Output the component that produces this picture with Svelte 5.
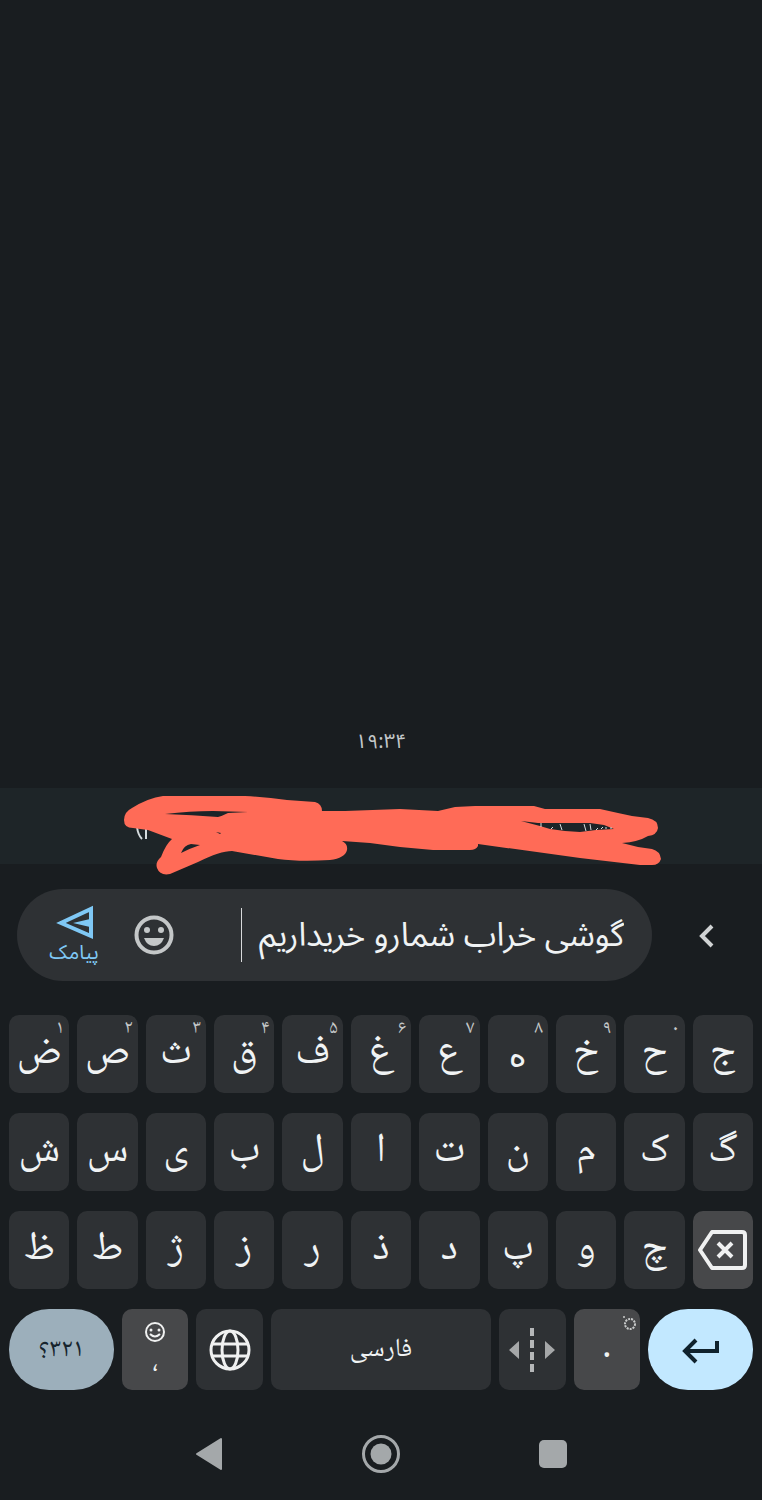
<script lang="ts">
	type Key = { label: string; hint?: string; plain?: boolean };

	const rows: Key[][] = [
		[
			{ label: 'ض', hint: '۱' },
			{ label: 'ص', hint: '۲' },
			{ label: 'ث', hint: '۳' },
			{ label: 'ق', hint: '۴' },
			{ label: 'ف', hint: '۵' },
			{ label: 'غ', hint: '۶' },
			{ label: 'ع', hint: '۷' },
			// the Noto faces draw a lone heh knotted
			{ label: 'ه', hint: '۸', plain: true },
			{ label: 'خ', hint: '۹' },
			{ label: 'ح', hint: '۰' },
			{ label: 'ج' }
		],
		[...'شسیبلاتنمکگ'].map((label) => ({ label })),
		[...'ظطژزرذدپوچ'].map((label) => ({ label }))
	];

	let draft = $state('گوشی خراب شمارو خریداریم');
</script>

<div class="phone">
	<main class="thread">
		<time class="stamp">۱۹:۳۴</time>
	</main>

	<div class="notice">
		<svg class="scribble" viewBox="0 788 762 92" aria-hidden="true">
			<g fill="none" stroke="#d5dcde" stroke-width="2">
				<path d="M137 827q1 8 5 12M146 829v10" />
			</g>
			<path
				fill="#ff6b57"
				d="M124 820Q124 812 132 808Q148 798 163 796H245Q267 797 287 800L315 802Q322 804 322 811L345 811L400 809L438 811L455 807L475 806H534L545 809H600L618 813L632 816L648 818Q658 820 658 828Q657 835 648 836Q638 842 622 843L638 847L652 849Q660 851 661 859Q659 865 652 865H640L580 858L478 844V846Q476 850 470 850H433L400 847L370 843L342 841Q348 844 347 850Q345 858 330 860Q300 862 278 859L232 851Q220 851 198 862L170 874Q160 876 157 868Q155 862 161 857Q166 844 172 839L148 830L133 828Q124 828 124 820Z"
			/>
			<g fill="#1c2428">
				<path d="M165 814Q190 811 213 811L248 812L228 813Q222 816 218 817Q192 815 165 814Z" />
				<path d="M181 853Q184 845 191 844L200 845Q191 848 181 853ZM216 832l5 1-1 1Z" />
				<path d="M521 821L538 823L590 823L604 825L614 829L596 830L580 832L565 831L550 829L540 826Z" />
			</g>
			<g fill="none" stroke="#d5dcde">
				<path
					d="M541 823v4M560 824l2 6M551 829l2-2M584 824l2 7M590 824l1 6M596 830l2-2M601 829l2-2M606 829v-2M611 829v-2"
				/>
			</g>
		</svg>
	</div>

	<form class="composer" onsubmit={(e) => e.preventDefault()}>
		<div class="field">
			<button class="send" type="submit">
				<svg width="40" height="36" viewBox="0 0 40 36" aria-hidden="true">
					<path d="M35 4V31L5 18Z" fill="none" stroke="#7fc8f5" stroke-width="4" />
					<path d="M34 14V22L17 18Z" fill="#7fc8f5" />
				</svg>
				<span>پیامک</span>
			</button>
			<button class="emoji" type="button" aria-label="شکلک">
				<svg width="40" height="40" viewBox="0 0 40 40" aria-hidden="true">
					<circle cx="20" cy="20" r="17.5" fill="none" stroke="#c4c7c8" stroke-width="4" />
					<circle cx="13" cy="15" r="3" fill="#c4c7c8" />
					<circle cx="27" cy="15" r="3" fill="#c4c7c8" />
					<path d="M10 23H30Q27 31 20 31T10 23Z" fill="#c4c7c8" />
				</svg>
			</button>
			<span class="caret"></span>
			<input class="draft" type="text" dir="rtl" aria-label="متن پیام" bind:value={draft} />
		</div>
		<button class="more" type="button" aria-label="بیشتر">
			<svg width="24" height="28" viewBox="0 0 24 28" aria-hidden="true">
				<path d="M17 5L7 15L17 25" fill="none" stroke="#d0d3d4" stroke-width="4" />
			</svg>
		</button>
	</form>

	<section class="keyboard">
		{#each rows as row, i}
			<div class="row">
				{#each row as key}
					<button class="key" class:plain={key.plain} type="button">
						<span>{key.label}</span>
						{#if key.hint}<span class="hint">{key.hint}</span>{/if}
					</button>
				{/each}
				{#if i === 2}
					<button class="key light" type="button" aria-label="پاک کردن">
						<svg width="50" height="40" viewBox="0 0 50 40" aria-hidden="true">
							<g fill="none" stroke="#f0f1f1" stroke-width="4" stroke-linejoin="round">
								<path d="M14 2H44Q47 2 47 5V35Q47 38 44 38H14L2 20Z" />
								<path d="M20 13L34 27M34 13L20 27" />
							</g>
						</svg>
					</button>
				{/if}
			</div>
		{/each}

		<div class="row bottom">
			<button class="key symbols" type="button" dir="rtl">۳۲۱؟</button>
			<button class="key light comma" type="button">
				<svg width="22" height="22" viewBox="0 0 22 22" aria-hidden="true">
					<circle cx="11" cy="11" r="9" fill="none" stroke="#f0f1f1" stroke-width="2" />
					<circle cx="7" cy="9" r="1.5" fill="#f0f1f1" />
					<circle cx="15" cy="9" r="1.5" fill="#f0f1f1" />
					<path d="M6 13Q11 18 16 13" fill="none" stroke="#f0f1f1" stroke-width="2" />
				</svg>
				<span>،</span>
			</button>
			<button class="key" type="button" aria-label="تغییر زبان">
				<svg width="42" height="42" viewBox="0 0 42 42" aria-hidden="true">
					<g fill="none" stroke="#f0f1f1" stroke-width="3">
						<circle cx="21" cy="21" r="19" />
						<ellipse cx="21" cy="21" rx="8" ry="19" />
						<path d="M3 15H39M3 27H39" />
					</g>
				</svg>
			</button>
			<button class="key space" type="button">فارسی</button>
			<button class="key" type="button" aria-label="جابه‌جایی مکان‌نما">
				<svg width="48" height="44" viewBox="0 0 48 44" aria-hidden="true">
					<path d="M11 13V31L1 22ZM37 13V31L47 22Z" fill="#a5a7a8" />
					<path d="M24 0V44" stroke="#b5b7b8" stroke-width="4" stroke-dasharray="8 4" />
				</svg>
			</button>
			<button class="key light period" type="button">
				<span>.</span>
				<svg class="mark" width="16" height="16" viewBox="0 0 16 16" aria-hidden="true">
					<circle cx="9" cy="9" r="5" fill="none" stroke="#c8caca" stroke-width="2" stroke-dasharray="2 1" />
					<circle cx="3" cy="2" r="1" fill="#c8caca" />
				</svg>
			</button>
			<button class="key enter" type="button" aria-label="خط بعد">
				<svg width="40" height="28" viewBox="0 0 40 28" aria-hidden="true">
					<path d="M36 5V15H5M15 4L4 15L15 26" fill="none" stroke="#10222d" stroke-width="4" />
				</svg>
			</button>
		</div>
	</section>

	<nav class="system">
		<button type="button" aria-label="بازگشت">
			<svg width="40" height="40" viewBox="0 0 40 40" aria-hidden="true">
				<path
					d="M32 5V35L8 20Z"
					fill="#a4a8aa"
					stroke="#a4a8aa"
					stroke-width="2"
					stroke-linejoin="round"
				/>
			</svg>
		</button>
		<button type="button" aria-label="خانه">
			<svg width="40" height="40" viewBox="0 0 40 40" aria-hidden="true">
				<circle cx="20" cy="20" r="17.5" fill="none" stroke="#a4a8aa" stroke-width="3" />
				<circle cx="20" cy="20" r="10.5" fill="#a4a8aa" />
			</svg>
		</button>
		<button type="button" aria-label="برنامه‌های اخیر">
			<svg width="40" height="40" viewBox="0 0 40 40" aria-hidden="true">
				<rect x="6" y="6" width="28" height="28" rx="5" fill="#a4a8aa" />
			</svg>
		</button>
	</nav>
</div>

<style>
	:global(body) {
		background: #191d20;
	}

	.phone {
		display: flex;
		flex-direction: column;
		min-height: 100vh;
		background: #191d20;
		color: #f0f3f4;
		font-family: 'Noto Sans Arabic', 'DejaVu Sans', sans-serif;
	}

	button {
		display: flex;
		align-items: center;
		justify-content: center;
		padding: 0;
		border: 0;
		background: none;
		color: inherit;
		font: inherit;
		cursor: pointer;
	}

	svg {
		display: block;
		flex: none;
	}

	.thread {
		flex: 1;
		display: flex;
		align-items: flex-end;
		justify-content: center;
		padding-bottom: 32px;
	}

	.stamp {
		color: #c4c8ca;
		font-size: 20px;
		line-height: 28px;
	}

	.notice {
		position: relative;
		height: 76px;
		background: #1e2528;
	}

	.scribble {
		position: absolute;
		top: 0;
		left: 0;
		width: 100%;
	}

	.composer {
		display: flex;
		align-items: center;
		gap: 43px;
		padding: 25px 43px 34px 17px;
	}

	.field {
		flex: 1;
		display: flex;
		align-items: center;
		min-width: 0;
		height: 92px;
		padding: 0 28px;
		box-sizing: border-box;
		border-radius: 46px;
		background: #2e3134;
	}

	.send {
		flex-direction: column;
		width: 58px;
		color: #7fc8f5;
		font-size: 20px;
		line-height: 24px;
	}

	.send svg {
		margin-left: 4px;
	}

	.emoji {
		margin-left: 31px;
	}

	.caret {
		width: 1px;
		height: 54px;
		margin-left: 67px;
		background: #d8dadb;
	}

	.draft {
		flex: 1;
		min-width: 0;
		height: 60px;
		padding: 0;
		border: 0;
		outline: 0;
		background: none;
		color: inherit;
		font: inherit;
		font-size: 33px;
	}

	.keyboard {
		display: flex;
		flex-direction: column;
		gap: 20px;
		padding: 0 9px;
	}

	.row {
		display: grid;
		grid-template-columns: repeat(11, minmax(0, 1fr));
		gap: 8px;
	}

	.bottom {
		grid-template-columns: 104fr 66fr 66fr 218fr 66fr 66fr 104fr;
	}

	.key {
		position: relative;
		height: 78px;
		border-radius: 10px;
		background: #2e3134;
		font-family: 'Noto Naskh Arabic', 'Noto Naskh Arabic UI', 'DejaVu Sans', sans-serif;
		font-size: 41px;
		line-height: 40px;
	}

	.plain {
		font-family: 'DejaVu Sans', sans-serif;
		font-size: 34px;
	}

	.hint {
		position: absolute;
		top: 4px;
		right: 5px;
		color: #c4c7c8;
		font-family: 'Noto Naskh Arabic', 'DejaVu Sans', sans-serif;
		font-size: 19px;
		line-height: 20px;
	}

	.bottom .key {
		height: 81px;
	}

	.light {
		background: #47484a;
	}

	.bottom .symbols {
		border-radius: 40px;
		background: #9cafbb;
		color: #17242d;
		font-size: 26px;
	}

	.comma {
		flex-direction: column;
		gap: 4px;
	}

	.bottom .comma {
		font-size: 26px;
		line-height: 32px;
	}

	.bottom .space {
		font-size: 26px;
	}

	.bottom .period {
		font-size: 36px;
	}

	.mark {
		position: absolute;
		top: 6px;
		right: 3px;
	}

	.bottom .enter {
		border-radius: 40px;
		background: #c2e8ff;
	}

	.system {
		display: flex;
		justify-content: center;
		gap: 132px;
		padding: 44px 0 26px;
	}
</style>
